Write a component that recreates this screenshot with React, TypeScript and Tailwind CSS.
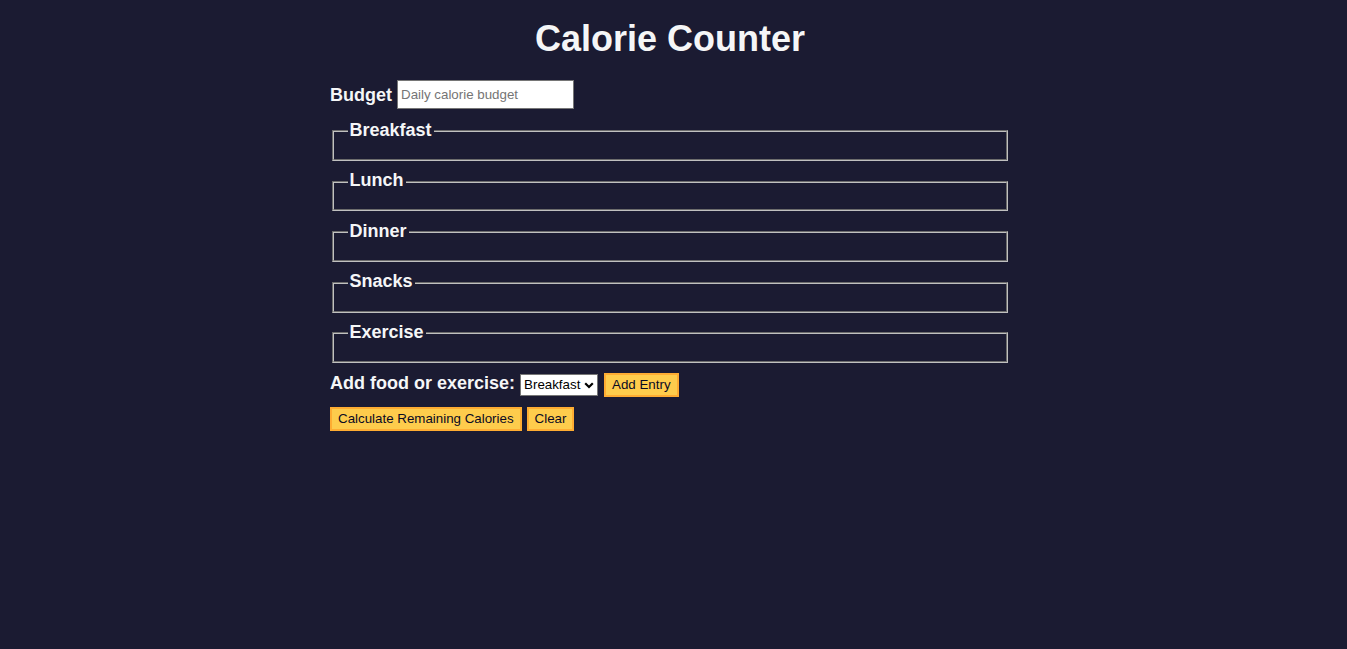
import React from "react";

const meals = ["Breakfast", "Lunch", "Dinner", "Snacks", "Exercise"];

export default function App() {
  return (
    <div
      className="min-h-[649px] w-full bg-[#1b1b32] text-[#f5f6f7] pr-[7px]"
      style={{ fontFamily: '"Liberation Sans", Arial, sans-serif' }}
    >
      <div className="mx-auto w-[680px] flex flex-col">
        <h1 className="mt-[18px] h-[41px] text-center text-[36px] font-bold leading-[41px]">
          Calorie Counter
        </h1>

        <div className="mt-[21px] flex items-center h-[29px]">
          <label className="text-[18px] font-bold leading-[21px] mt-[1px]">Budget</label>
          <input
            type="number"
            placeholder="Daily calorie budget"
            className="ml-[5px] h-[29px] w-[177px] border border-[#767676] bg-white px-[3px] text-[13.33px] text-black placeholder:text-[#757575] [appearance:textfield]"
          />
        </div>

        <div className="mt-[11.6px] flex flex-col gap-[10.35px]">
          {meals.map((m) => (
            <fieldset
              key={m}
              className="mx-[2px] border-2 border-[#c0c0c0] [border-style:groove] px-[13.5px] pt-[6.3px] pb-[11.25px] text-[18px]"
            >
              <legend className="px-[2px] text-[18px] font-bold leading-[20.7px] -translate-y-[1px]">{m}</legend>
              <div></div>
            </fieldset>
          ))}
        </div>

        <div className="mt-[10px] flex items-center h-[24px]">
          <label className="text-[18px] font-bold leading-[21px] mb-[4px]">Add food or exercise:</label>
          <div className="relative ml-[5px] h-[22.3px] w-[78px]">
            <select
              defaultValue="breakfast"
              className="block h-full w-full appearance-none border border-[#767676] bg-white pl-[3px] pr-[14px] text-[13.33px] leading-[16px] text-black"
            >
              <option value="breakfast">Breakfast</option>
              <option value="lunch">Lunch</option>
              <option value="dinner">Dinner</option>
              <option value="snacks">Snacks</option>
              <option value="exercise">Exercise</option>
            </select>
            <svg
              className="pointer-events-none absolute right-[4px] top-[8px]"
              width="10"
              height="7"
              viewBox="0 0 10 7"
            >
              <path d="M1.2 1.2 L5 5 L8.8 1.2" fill="none" stroke="#000" strokeWidth="2.2" />
            </svg>
          </div>
          <button className="ml-[6px] h-[24px] border-2 border-[#feac32] bg-[#fecc4c] px-[6px] text-[13.33px] leading-[16px] text-[#0a0a23]">
            Add Entry
          </button>
        </div>

        <div className="mt-[10px] flex items-center h-[24px]">
          <button className="h-[24px] border-2 border-[#feac32] bg-[#fecc4c] px-[6px] text-[13.33px] leading-[16px] text-[#0a0a23]">
            Calculate Remaining Calories
          </button>
          <button className="ml-[5px] h-[24px] border-2 border-[#feac32] bg-[#fecc4c] px-[6px] text-[13.33px] leading-[16px] text-[#0a0a23]">
            Clear
          </button>
        </div>
      </div>
    </div>
  );
}
